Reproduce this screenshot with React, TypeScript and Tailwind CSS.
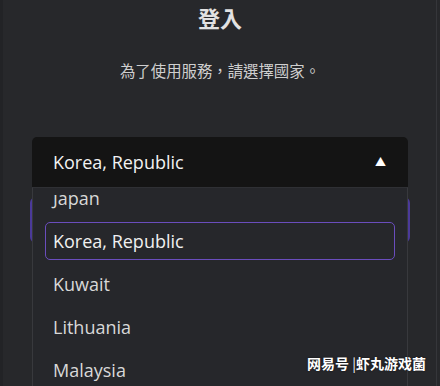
import { ReactNode } from "react";

const countries = ["Japan", "Korea, Republic", "Kuwait", "Lithuania", "Malaysia", "Maldives"];
const selected = "Korea, Republic";

function Option({ label, active }: { label: string; active: boolean }): ReactNode {
  return (
    <div
      className={`h-[38px] flex items-center px-[7px] rounded-[5px] text-[18px] ${
        active ? "border-[1.5px] border-[#6a4dbd] text-[#f0f0f0]" : "border-[1.5px] border-transparent text-[#d8d8d8]"
      }`}
    >
      {label}
    </div>
  );
}

export default function App() {
  return (
    <div
      className="relative w-[440px] h-[386px] overflow-hidden bg-[#27282b] text-[#e4e4e4]"
      style={{ fontFamily: '"Open Sans", "Noto Sans CJK TC", sans-serif' }}
    >
      <div className="absolute left-0 top-0 bottom-0 w-[3px] bg-[#222326]" />
      <div className="absolute right-[3px] top-0 bottom-0 w-px bg-[#35363a]" />

      <div className="flex flex-col items-center">
        <h1 className="mt-[3px] text-[22px] leading-[30px] font-bold text-[#e2e2e2]">登入</h1>
        <p className="mt-[28px] text-[15.4px] leading-[22px] text-[#cfcfcf]">為了使用服務，請選擇國家。</p>
      </div>

      <div className="relative mx-[32px] mt-[54px]">
        <div className="h-[50px] flex items-center justify-between pl-[21px] pr-[22px] bg-[#141414] rounded-t-[5px] text-[18px] text-[#f2f2f2]">
          <span>{selected}</span>
          <span className="text-[11px] text-white">▲</span>
        </div>

        {/* the button underneath the open list */}
        <div className="mt-[10px] -mx-[2px] h-[46px] rounded-[6px] border-2 border-[#4b3a9a]" />

        <div className="absolute left-0 right-0 top-[50px] h-[220px] bg-[#26272b] border border-[#38393d] border-t-[#2f3034] pt-[7px]">
          <div className="h-full overflow-hidden">
            <div className="flex flex-col gap-[5px] px-[12px] -mt-[16px]">
              {countries.map((c) => (
                <Option key={c} label={c} active={c === selected} />
              ))}
            </div>
          </div>
        </div>
      </div>

      <div
        className="absolute right-[14px] bottom-[12px] text-[14px] font-semibold text-white"
        style={{ fontFamily: '"Noto Sans CJK SC", sans-serif', textShadow: "0 0 2px rgba(0,0,0,0.6)" }}
      >
        网易号 <span className="font-normal">|</span>虾丸游戏菌
      </div>
    </div>
  );
}
